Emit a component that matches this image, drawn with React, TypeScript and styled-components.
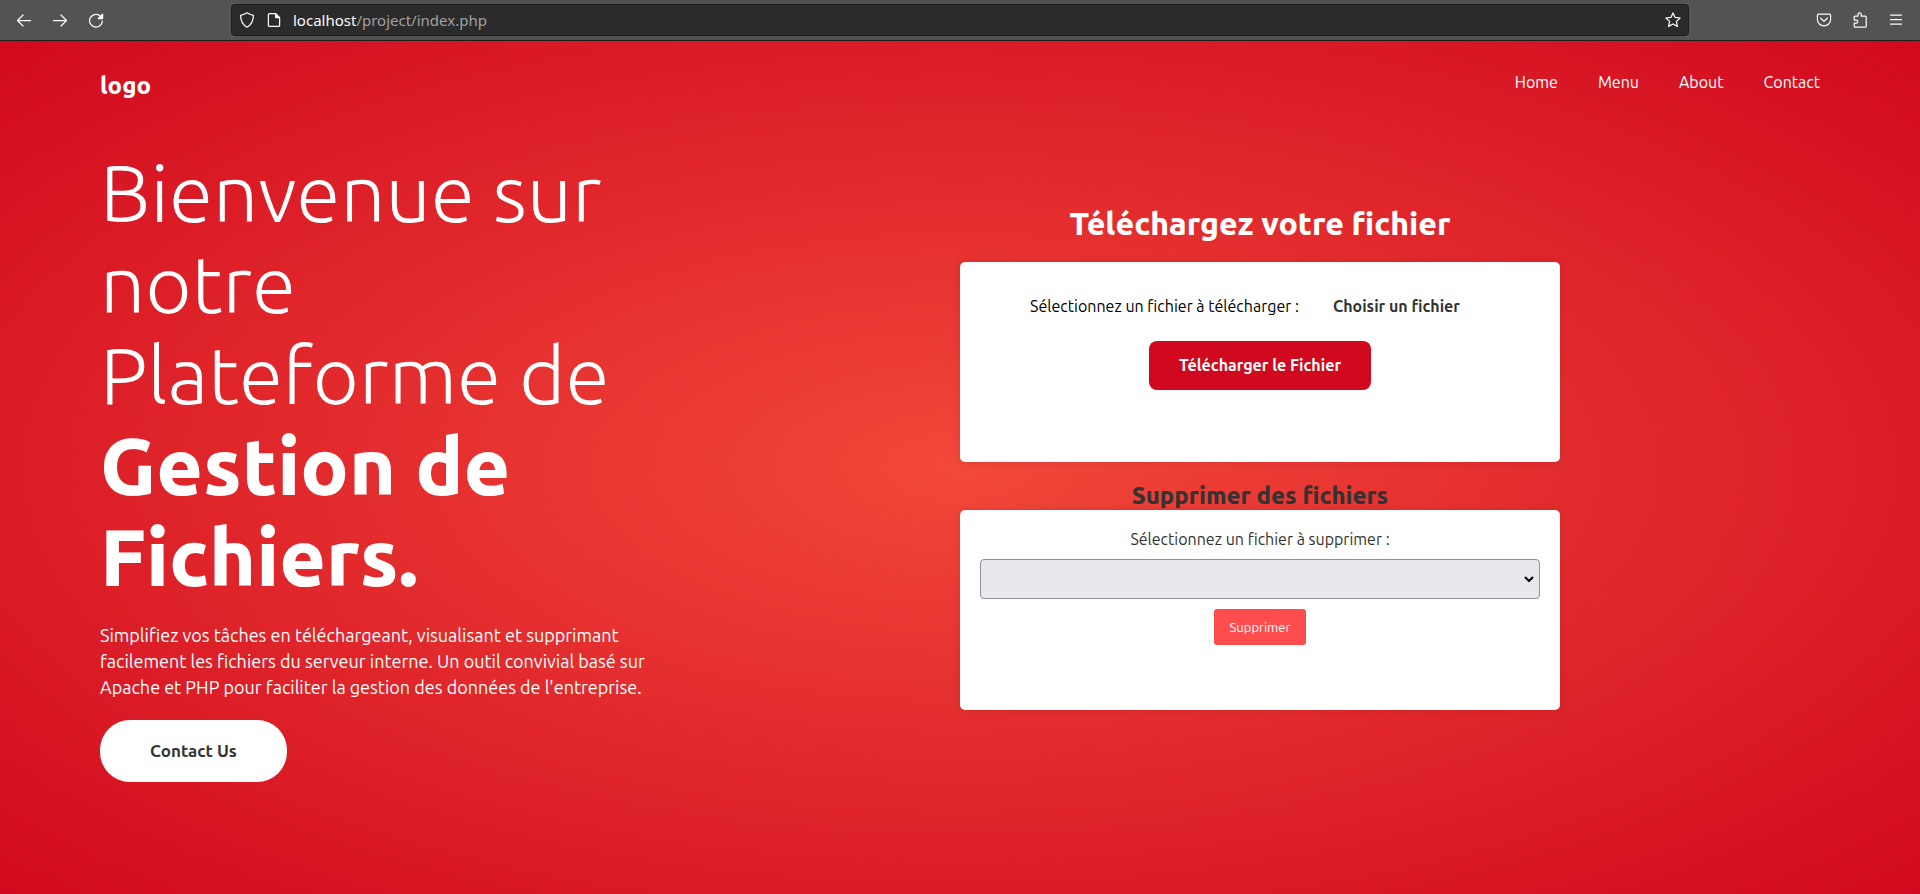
import React from "react";
import styled, { createGlobalStyle } from "styled-components";

const GlobalStyle = createGlobalStyle`
  *, *::before, *::after { box-sizing: border-box; }
  html { height: 100%; }
  body {
    margin: 0;
    height: 100%;
    font-family: Ubuntu, "Open Sans", "Noto Sans", sans-serif;
    font-size: 16px;
    line-height: 20px;
  }
  #root { min-height: 100%; display: flex; flex-direction: column; }
  h1, h2, h3, p { margin: 0; }
  button, input, select { font-family: inherit; }
`;

/* Browser bar */
const Toolbar = styled.div`
  display: grid;
  grid-template-columns: 231px minmax(0, 1fr) 231px;
  align-items: center;
  height: 41px;
  background: #535353;
  border-bottom: 1px solid #1e1e1e;
  color: #fbfbfe;
`;

const ToolGroup = styled.div<{ $end?: boolean }>`
  display: flex;
  gap: 20px;
  padding: 0 16px;
  justify-content: ${(p) => (p.$end ? "flex-end" : "flex-start")};
`;

const ToolButton = styled.button`
  display: flex;
  padding: 0;
  border: 0;
  background: none;
  color: inherit;
`;

const AddressBar = styled.div`
  display: flex;
  align-items: center;
  gap: 11px;
  height: 32px;
  padding: 0 7px;
  background: #2b2b2b;
  border: 1px solid #1c1c1c;
  border-radius: 4px;
`;

const Address = styled.span`
  flex: 1;
  color: #a0a0a0;
  font-family: "Noto Sans", sans-serif;
  font-size: 15px;
`;

const Host = styled.span`
  color: #fbfbfe;
`;

const Glyph = styled.svg`
  display: block;
  width: 16px;
  height: 16px;
  fill: none;
  stroke: currentColor;
  stroke-width: 1.25;
  stroke-linecap: round;
  stroke-linejoin: round;
`;

/* Page */
const Page = styled.div`
  flex: 1;
  background: radial-gradient(#f2483a, #d1091e);
  color: #fff;
`;

const Header = styled.header`
  display: flex;
  justify-content: space-between;
  align-items: flex-start;
  padding: 31px 100px 0;
`;

const Logo = styled.a`
  color: inherit;
  font-size: 24px;
  font-weight: 800;
  line-height: 28px;
  text-decoration: none;
`;

const Nav = styled.nav`
  display: flex;
  gap: 40px;
`;

const NavLink = styled.a`
  color: inherit;
  text-decoration: none;
`;

const Hero = styled.main`
  display: grid;
  grid-template-columns: minmax(0, 1fr) minmax(0, 1fr);
  align-items: start;
  padding: 47px 0 40px;
`;

const Intro = styled.section`
  display: flex;
  flex-direction: column;
  align-items: flex-start;
  gap: 20px;
  max-width: 660px;
  padding-left: 100px;
`;

const Title = styled.h1`
  font-size: 80px;
  font-weight: 300;
  line-height: 91px;
`;

const Strong = styled.b`
  font-weight: 800;
`;

const Lead = styled.p`
  font-size: 18px;
  line-height: 26px;
`;

const ContactLink = styled.a`
  padding: 20px 50px;
  border-radius: 30px;
  background: #fff;
  color: #333;
  font-size: 17px;
  font-weight: 600;
  line-height: 22px;
  text-decoration: none;
`;

const Panels = styled.section`
  display: flex;
  flex-direction: column;
  max-width: 600px;
  padding-top: 57px;
  text-align: center;
`;

const UploadTitle = styled.h2`
  margin-bottom: 20px;
  font-size: 32px;
  font-weight: 800;
  line-height: 38px;
`;

const DeleteTitle = styled.h3`
  padding-top: 20px;
  color: #333;
  font-size: 24px;
  font-weight: 800;
  line-height: 28px;
`;

const Card = styled.form`
  display: flex;
  flex-direction: column;
  align-items: center;
  gap: 10px;
  min-height: 200px;
  padding: 20px;
  border-radius: 5px;
  background: #fff;
  color: #333;
  line-height: 19px;
  box-shadow: 0 0 10px rgba(0, 0, 0, 0.1);
`;

const FileRow = styled.div`
  display: flex;
  align-items: center;
  gap: 4px;
`;

const FileLabel = styled.label`
  color: #000;
`;

const ChooseFile = styled.label`
  padding: 15px 30px;
  border-radius: 8px;
  font-weight: 600;
  cursor: pointer;
`;

const FileInput = styled.input`
  position: absolute;
  width: 1px;
  height: 1px;
  opacity: 0;
`;

const UploadButton = styled.button`
  padding: 15px 30px;
  border: 0;
  border-radius: 8px;
  background: #d1091e;
  color: #fff;
  font-size: 16px;
  font-weight: 600;
  line-height: 19px;
`;

const SelectWrap = styled.div`
  position: relative;
  width: 100%;
`;

const FileSelect = styled.select`
  display: block;
  appearance: none;
  width: 100%;
  height: 40px;
  border: 1px solid #8f8f9d;
  border-radius: 4px;
  background: #e9e9ed;
`;

const Chevron = styled.svg`
  position: absolute;
  top: 17px;
  right: 6px;
  width: 10px;
  height: 7px;
  fill: none;
  stroke: #000;
  stroke-width: 2;
  pointer-events: none;
`;

const DeleteButton = styled.button`
  padding: 10px 16px;
  border: 0;
  border-radius: 3px;
  background: #ff4d4d;
  color: #fff;
  font-size: 13px;
  line-height: 16px;
`;

function Icon({ children }: { children: React.ReactNode }) {
  return (
    <Glyph viewBox="0 0 16 16" aria-hidden="true">
      {children}
    </Glyph>
  );
}

function BrowserBar() {
  return (
    <Toolbar>
      <ToolGroup>
        <ToolButton aria-label="Back">
          <Icon><path d="M14.5 8.5H1.7M7 3 1.5 8.5 7 14" /></Icon>
        </ToolButton>
        <ToolButton aria-label="Forward">
          <Icon><path d="M1.5 8.5h12.8M9 3l5.5 5.5L9 14" /></Icon>
        </ToolButton>
        <ToolButton aria-label="Reload">
          <Icon>
            <path d="M11.8 3.6A6.4 6.4 0 1 0 14.4 9" />
            <path d="M14.6 2.2v4.3h-4.3z" fill="currentColor" />
          </Icon>
        </ToolButton>
      </ToolGroup>
      <AddressBar>
        <Icon>
          <path d="M8 .8c2 1.5 4 2.1 6.4 2.5 0 5-1.5 9.2-6.4 11.9C3.1 12.5 1.6 8.3 1.6 3.3 4 2.9 6 2.3 8 .8z" />
        </Icon>
        <Icon>
          <path d="M3.6 1.6h6l4 4v7.6a1.2 1.2 0 0 1-1.2 1.2H3.6a1.2 1.2 0 0 1-1.2-1.2V2.8a1.2 1.2 0 0 1 1.2-1.2z" />
          <path d="M9.6 1.8v3.8h3.8z" fill="currentColor" />
        </Icon>
        <Address><Host>localhost</Host>/project/index.php</Address>
        <ToolButton aria-label="Bookmark">
          <Icon>
            <path d="M8 .9l2.1 4.5 5 .6-3.7 3.4 1 5L8 12l-4.4 2.4 1-5L.9 6l5-.6z" />
          </Icon>
        </ToolButton>
      </AddressBar>
      <ToolGroup $end>
        <ToolButton aria-label="Pocket">
          <Icon>
            <path d="M2.6 2h10.8A1.2 1.2 0 0 1 14.6 3.2V7.5a6.6 6.3 0 0 1-13.2 0V3.2A1.2 1.2 0 0 1 2.6 2z" />
            <path d="M4.7 6.2 8 9.4l3.3-3.2" />
          </Icon>
        </ToolButton>
        <ToolButton aria-label="Extensions">
          <Icon>
            <path d="M2.2 5.2a1 1 0 0 1 1-1H6V2.5a1.6 1.6 0 0 1 3.2 0v1.7h4a1 1 0 0 1 1 1v9a1 1 0 0 1-1 1h-10a1 1 0 0 1-1-1v-3h2a1.6 1.6 0 0 0 0-3.2h-2z" />
          </Icon>
        </ToolButton>
        <ToolButton aria-label="Open menu">
          <Icon><path d="M2.5 3h11M2.5 7.5h11M2.5 12h11" /></Icon>
        </ToolButton>
      </ToolGroup>
    </Toolbar>
  );
}

export default function App() {
  return (
    <>
      <GlobalStyle />
      <BrowserBar />
      <Page>
        <Header>
          <Logo href="#">logo</Logo>
          <Nav>
            {["Home", "Menu", "About", "Contact"].map((item) => (
              <NavLink key={item} href="#">{item}</NavLink>
            ))}
          </Nav>
        </Header>
        <Hero>
          <Intro>
            <Title>
              Bienvenue sur notre Plateforme de <Strong>Gestion de Fichiers.</Strong>
            </Title>
            <Lead>
              Simplifiez vos tâches en téléchargeant, visualisant et supprimant
              facilement les fichiers du serveur interne. Un outil convivial basé
              sur Apache et PHP pour faciliter la gestion des données de
              l'entreprise.
            </Lead>
            <ContactLink href="#">Contact Us</ContactLink>
          </Intro>
          <Panels>
            <UploadTitle>Téléchargez votre fichier</UploadTitle>
            <Card>
              <FileRow>
                <FileLabel htmlFor="upload">Sélectionnez un fichier à télécharger :</FileLabel>
                <ChooseFile htmlFor="upload">Choisir un fichier</ChooseFile>
                <FileInput id="upload" type="file" />
              </FileRow>
              <UploadButton type="button">Télécharger le Fichier</UploadButton>
            </Card>
            <DeleteTitle>Supprimer des fichiers</DeleteTitle>
            <Card>
              <label htmlFor="remove">Sélectionnez un fichier à supprimer :</label>
              <SelectWrap>
                <FileSelect id="remove" />
                <Chevron viewBox="0 0 10 7" aria-hidden="true">
                  <path d="M1 1l4 4 4-4" />
                </Chevron>
              </SelectWrap>
              <DeleteButton type="button">Supprimer</DeleteButton>
            </Card>
          </Panels>
        </Hero>
      </Page>
    </>
  );
}
